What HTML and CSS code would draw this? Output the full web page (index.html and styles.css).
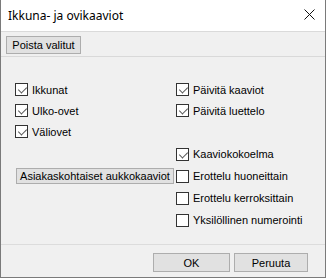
FILE: index.html
```html
<!DOCTYPE html>
<html>
<head>
<meta charset="utf-8">
<link rel="stylesheet" href="styles.css">
</head>
<body>
<div class="window">
  <div class="titlebar">
    <span class="title">Ikkuna- ja ovikaaviot</span>
    <svg class="close" width="11" height="11" viewBox="0 0 11 11"><path d="M0.5 0.5 L10.5 10.5 M10.5 0.5 L0.5 10.5" stroke="#111" stroke-width="1" fill="none"/></svg>
  </div>
  <div class="toolbar">
    <button class="btn small">Poista valitut</button>
  </div>
  <div class="content">
    <div class="col left">
      <label class="row"><span class="box checked"></span><span class="lbl">Ikkunat</span></label>
      <label class="row"><span class="box checked"></span><span class="lbl">Ulko-ovet</span></label>
      <label class="row"><span class="box checked"></span><span class="lbl">Väliovet</span></label>
      <button class="btn wide">Asiakaskohtaiset aukkokaaviot</button>
    </div>
    <div class="col right">
      <label class="row"><span class="box checked"></span><span class="lbl">Päivitä kaaviot</span></label>
      <label class="row"><span class="box checked"></span><span class="lbl">Päivitä luettelo</span></label>
      <div class="group">
        <label class="row tall"><span class="box checked"></span><span class="lbl">Kaaviokokoelma</span></label>
        <label class="row tall"><span class="box"></span><span class="lbl">Erottelu huoneittain</span></label>
        <label class="row tall"><span class="box"></span><span class="lbl">Erottelu kerroksittain</span></label>
        <label class="row tall"><span class="box"></span><span class="lbl">Yksilöllinen numerointi</span></label>
      </div>
    </div>
  </div>
  <div class="footer">
    <button class="btn ok">OK</button>
    <button class="btn cancel">Peruuta</button>
  </div>
</div>
</body>
</html>
```
FILE: styles.css
```css
* { box-sizing: border-box; }
html, body { margin: 0; padding: 0; background: #ffffff; }
body { font-family: "Liberation Sans", Arial, sans-serif; font-size: 11px; color: #000; }

.window {
  width: 326px;
  height: 278px;
  border-left: 1px solid #7a7a7a;
  border-right: 1px solid #7a7a7a;
  border-bottom: 1px solid #7a7a7a;
  background: #f0f0f0;
  display: flex;
  flex-direction: column;
}

.titlebar {
  height: 32px;
  background: #ffffff;
  border-bottom: 1px solid #dadada;
  display: flex;
  align-items: center;
  justify-content: space-between;
  padding: 0 10px 0 7px;
  flex: none;
}
.title {
  font-family: "Noto Sans", "Liberation Sans", sans-serif;
  font-size: 12px;
  color: #000;
  margin-top: -1px;
}
.close { display: block; margin-top: -2px; }

.toolbar {
  height: 25px;
  border-bottom: 1px solid #d9d9d9;
  padding: 4px 0 0 5px;
  flex: none;
}

.btn {
  font-family: "Liberation Sans", Arial, sans-serif;
  font-size: 11px;
  color: #000;
  background: #e1e1e1;
  border: 1px solid #adadad;
  border-radius: 0;
  margin: 0;
  padding: 0 3px;
  display: flex;
  align-items: center;
  justify-content: center;
  white-space: nowrap;
}
.btn.small { width: 75px; height: 18px; }
.btn.wide { width: 158px; height: 16px; margin: 26px 0 0 1px; }
.btn.ok { width: 77px; height: 19px; }
.btn.cancel { width: 74px; height: 19px; }

.content {
  flex: 1;
  display: grid;
  grid-template-columns: 161px 1fr;
  padding-top: 22px;
}
.col { display: flex; flex-direction: column; align-items: flex-start; padding-left: 14px; }

.row {
  height: 21px;
  display: flex;
  align-items: center;
  gap: 4px;
}
.row.tall { height: 22px; }
.group { margin-top: 22px; display: flex; flex-direction: column; }

.box {
  width: 13px;
  height: 13px;
  border: 1px solid #333333;
  background: #ffffff;
  position: relative;
  flex: none;
}
.box.checked::after {
  content: "";
  position: absolute;
  left: 2px;
  top: 1px;
  width: 7px;
  height: 4px;
  border-left: 1px solid #555;
  border-bottom: 1px solid #555;
  transform: translate(0.5px, 1.5px) rotate(-45deg);
  transform-origin: center;
}
.lbl { white-space: nowrap; }

.footer {
  height: 33px;
  border-top: 1px solid #dcdcdc;
  display: flex;
  justify-content: flex-end;
  gap: 4px;
  padding: 8px 17px 0 0;
  flex: none;
}
```
